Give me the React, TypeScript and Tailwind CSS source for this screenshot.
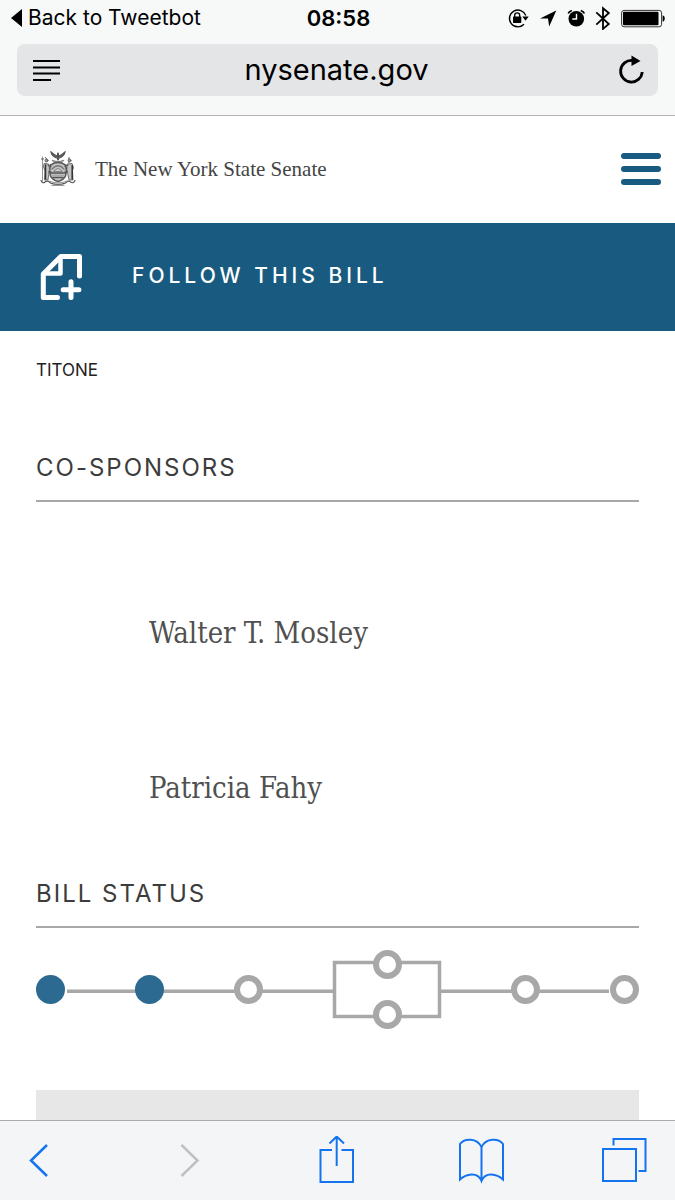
import type { ReactNode } from 'react';

const sans = "font-['Inter','Liberation_Sans',sans-serif]";
const serif = "font-['DejaVu_Serif_Condensed','DejaVu_Serif',serif]";

function StatusIcons() {
  return (
    <svg className="h-6 w-40" viewBox="507 6 160 24" aria-hidden="true">
      <g fill="none" stroke="#000" strokeWidth="1.4">
        <path d="M525.8 15.6A8.4 8.4 0 1 0 524 24.2" />
        <path d="M514.7 17v-1.7a2.5 2.5 0 0 1 5 0V17" strokeWidth="1.3" />
      </g>
      <rect x="513" y="16.5" width="8.3" height="6.5" rx=".7" />
      <path d="M522.3 16.6h6.4l-3.2 4.2z" />
      <path d="M540 18.4 556.3 10.5 549.2 26.5 548 18.6z" />
      <circle cx="576.3" cy="18.7" r="7.8" />
      <path d="M576.5 13.8v5.2h-4.2" fill="none" stroke="#fff" strokeWidth="1.4" />
      <path d="M568.2 13.6q.6-2 3.6-3.2M584.4 13.6q-.6-2-3.6-3.2" fill="none" stroke="#000" strokeWidth="1.6" />
      <path d="M596.3 12.3 608.8 24 603 28.9V8.2L608.8 13 596.3 24.6" fill="none" stroke="#000" strokeWidth="1.8" />
      <rect x="621.6" y="10.4" width="40" height="16.4" rx="2.5" fill="none" stroke="#333" strokeWidth="1" />
      <rect x="623" y="11.8" width="35.5" height="13.4" rx="1" />
      <path d="M662.6 15.3q2.2.6 2.2 3.2t-2.2 3.2z" />
    </svg>
  );
}

function StateSeal() {
  return (
    <svg className="size-9 shrink-0" viewBox="0 0 36 36" aria-hidden="true">
      <g fill="none" stroke="#555" strokeLinecap="round">
        <path d="M18 5.500Q14 4 11 1q.5 4 5.500 6M18 5.500Q22 4 25 1q-.5 4-5.500 6" strokeWidth="1.200" fill="#666" />
        <path d="M18 2.500v6" strokeWidth="2" />
        <path d="M12.500 9.500q5.500 2.500 11 0M14 11.500h8" strokeWidth="1.500" stroke="#888" />
        <path d="M10.500 14q7.500-5 15 0l1 5-1 6q-2 4-7.500 5.500-5.500-1.500-7.500-5.500l-1-6z" strokeWidth="1.600" fill="#c4c4c4" />
        <path d="M12 18q6-6.500 12 0" strokeWidth="1.300" stroke="#777" />
        <path d="M14 20q4-5 8 0z" fill="#e4e4e4" strokeWidth=".7" />
        <path d="M11.500 22h13M13 26.500h10" strokeWidth="1.600" />
        <path d="M12.500 24.300h11" strokeWidth=".8" stroke="#999" />
        <path d="M2.500 6v24" strokeWidth=".9" stroke="#888" />
        <path d="M1.500 8h2M29 6.500v5M5.500 6.500l1.500 2" strokeWidth="1" />
        <circle cx="6.500" cy="9.500" r="1.500" fill="#999" strokeWidth=".8" />
        <circle cx="29.500" cy="9.500" r="1.500" fill="#999" strokeWidth=".8" />
        <path d="M4.500 12.500 8.500 13l1 5-1.500 11H4.500L5 20l-1.500-4z" fill="#c4c4c4" strokeWidth=".8" />
        <path d="M27.500 13 32 12.500l1.500 4-1 3 .5 9.500h-4L27 19z" fill="#c4c4c4" strokeWidth=".8" />
        <path d="M5.500 14v14M32.200 14.500V28" strokeWidth="1.500" stroke="#333" />
        <path d="M8 14l3 1.500M28 14l-3 1.500M8.500 21h3M24.500 21h3" strokeWidth="1.200" />
        <path d="M1 29.500q1.500 3.500 4 1.500 3-2 5.500 1 7.500 3 15 0 2.500-3 5-1 3 2 4.500-1.500" strokeWidth="1.200" />
        <path d="M9 30q9 4 18 0M12 34.300h12" strokeWidth="1.300" stroke="#999" />
      </g>
    </svg>
  );
}

function FollowIcon() {
  return (
    <svg className="h-12 w-11 shrink-0" viewBox="39 252 44 48" fill="none" stroke="#fff" strokeWidth="5" strokeLinecap="round" strokeLinejoin="round" aria-hidden="true">
      <path d="M57.500 297.500H43.300V274L60.800 256.400H79.500V276" />
      <path d="M44 273.500H60.500V258" strokeWidth="4.500" />
      <path d="M71 281.800v15.700M63.200 289.700h15.700" />
    </svg>
  );
}

function SectionHeading({ children }: { children: ReactNode }) {
  return (
    <h2 className="border-b-2 border-[#a8a8a8] pb-4 text-2xl leading-8 tracking-[2px] text-[#3c3c3c]">
      {children}
    </h2>
  );
}

function BillProgress() {
  const open = [
    [212, 39],
    [351, 14],
    [351, 64],
    [489, 39],
    [588, 39],
  ];
  return (
    <svg className="mt-[22px] w-full" viewBox="0 0 603 80" role="img" aria-label="Bill progress">
      <g fill="none" stroke="#a8a8a8" strokeWidth="3.500">
        <path d="M31 41.200H299M404 41.200H573" />
        <rect x="298.500" y="12.500" width="105" height="54" />
      </g>
      <circle cx="14.500" cy="39.500" r="14.500" fill="#2c6a92" />
      <circle cx="113.500" cy="39.500" r="14.500" fill="#2c6a92" />
      {open.map(([x, y]) => (
        <circle key={`${x}-${y}`} cx={x + 0.5} cy={y + 0.5} r="11.500" fill="#fff" stroke="#a8a8a8" strokeWidth="6" />
      ))}
    </svg>
  );
}

const sponsors = ['Walter T. Mosley', 'Patricia Fahy'];

export default function App() {
  return (
    <div className={`${sans} flex min-h-screen flex-col bg-white text-black`}>
      <header className="border-b border-[#b4b4b6] bg-[#f7f8f8] pb-[19px]">
        <div className="grid h-11 grid-cols-[1fr_auto_1fr] items-start pt-1.5 pr-2 pl-2.5">
          <a href="#tweetbot" className="flex items-center gap-1.5 text-[21px] leading-6">
            <svg className="h-5 w-3" viewBox="0 0 12 20" aria-hidden="true">
              <path d="M12 1v18L1 10z" />
            </svg>
            Back to Tweetbot
          </a>
          <time className="text-[22px] leading-6 font-semibold">08:58</time>
          <div className="flex justify-end">
            <StatusIcons />
          </div>
        </div>
        <div className="mx-[17px] flex h-[52px] items-center justify-between rounded-lg bg-[#e4e5e7] pr-3 pl-3.5">
          <button aria-label="Reader view">
            <svg className="h-6 w-8" viewBox="0 0 32 24" stroke="#000" strokeWidth="2" aria-hidden="true">
              <path d="M2 3h27M2 9.500h27M2 15.500h27M2 22h18" />
            </svg>
          </button>
          <span className="text-[29px] leading-9">nysenate.gov</span>
          <button aria-label="Reload" className="flex w-9 justify-end">
            <svg className="h-8 w-7" viewBox="617 54 28 32" fill="none" aria-hidden="true">
              <path d="M631.500 60.500A10.800 10.800 0 1 0 641.200 72" stroke="#000" strokeWidth="2.800" />
              <path d="M630.500 55.500v10.500l9-5z" fill="#000" />
            </svg>
          </button>
        </div>
      </header>

      <div className="flex h-[107px] items-center justify-between pr-3.5 pb-0.5 pl-10">
        <a href="#home" className="flex items-center gap-[19px]">
          <StateSeal />
          <span className="font-['Liberation_Serif',serif] text-[21px] leading-8 text-[#444]">The New York State Senate</span>
        </a>
        <button aria-label="Menu" className="flex w-10 flex-col gap-[7px]">
          <span className="h-1.5 rounded-sm bg-[#195b80]" />
          <span className="h-1.5 rounded-sm bg-[#195b80]" />
          <span className="h-1.5 rounded-sm bg-[#195b80]" />
        </button>
      </div>

      <button className="flex h-[108px] items-center gap-[49px] bg-[#195b80] px-[39px] pb-0.5 text-left text-white">
        <FollowIcon />
        <span className="text-[21px] leading-8 font-medium tracking-[4px]">FOLLOW THIS BILL</span>
      </button>

      <main className="flex flex-1 flex-col px-9">
        <p className="mt-[27px] text-[17px] leading-6 text-[#222]">TITONE</p>
        <section className="mt-[70px]">
          <SectionHeading>CO-SPONSORS</SectionHeading>
          <ul className={`${serif} mt-[54px] pl-[113px] text-[29px] leading-[155px] text-[#505050]`}>
            {sponsors.map((name) => (
              <li key={name}>{name}</li>
            ))}
          </ul>
        </section>
        <section className="mt-3">
          <SectionHeading>BILL STATUS</SectionHeading>
          <BillProgress />
        </section>
        <div className="mt-[60px] min-h-[30px] flex-1 bg-[#e7e7e7]" />
      </main>

      <nav aria-label="Browser" className="flex h-20 items-center justify-between border-t border-[#aaa] bg-[#f4f5f6] pr-[27px] pb-0.5 pl-[9px] text-[#1474f0]">
        <button aria-label="Back" className="flex w-[60px] justify-center">
          <svg className="h-12 w-6" viewBox="27 1136 24 48" fill="none" stroke="currentColor" strokeWidth="2.500" aria-hidden="true">
            <path d="M47 1145 31 1160.500 47 1176" />
          </svg>
        </button>
        <button aria-label="Forward" className="flex w-[52px] justify-center text-[#bfc0c2]">
          <svg className="h-12 w-6" viewBox="179 1136 24 48" fill="none" stroke="currentColor" strokeWidth="2.500" aria-hidden="true">
            <path d="M182.500 1145 198.500 1160.500 182.500 1176" />
          </svg>
        </button>
        <button aria-label="Share" className="flex w-[52px] justify-center">
          <svg className="h-12 w-10" viewBox="317 1135 40 48" fill="none" stroke="currentColor" strokeWidth="2" aria-hidden="true">
            <path d="M332 1149H320.500V1181H353V1149H341.500M336.700 1165V1136M329.500 1142.500 336.700 1135.500 344 1142.500" />
          </svg>
        </button>
        <button aria-label="Bookmarks" className="flex w-12 justify-center">
          <svg className="h-12 w-12" viewBox="457 1136 48 48" fill="none" stroke="currentColor" strokeWidth="2" aria-hidden="true">
            <path d="M481.500 1147C477 1137.500 464 1138 460 1144V1179.500C466 1174 477.500 1171 481.500 1181C485.500 1171 497 1174 503 1179.500V1144C499 1138 486 1137.500 481.500 1147V1180" />
          </svg>
        </button>
        <button aria-label="Tabs" className="flex w-12 justify-center">
          <svg className="h-12 w-12" viewBox="600 1136 48 48" fill="none" stroke="currentColor" strokeWidth="2" aria-hidden="true">
            <rect x="603" y="1149" width="33" height="32" />
            <path d="M613.500 1145.500V1139H645.500V1171H638.500" />
          </svg>
        </button>
      </nav>
    </div>
  );
}
